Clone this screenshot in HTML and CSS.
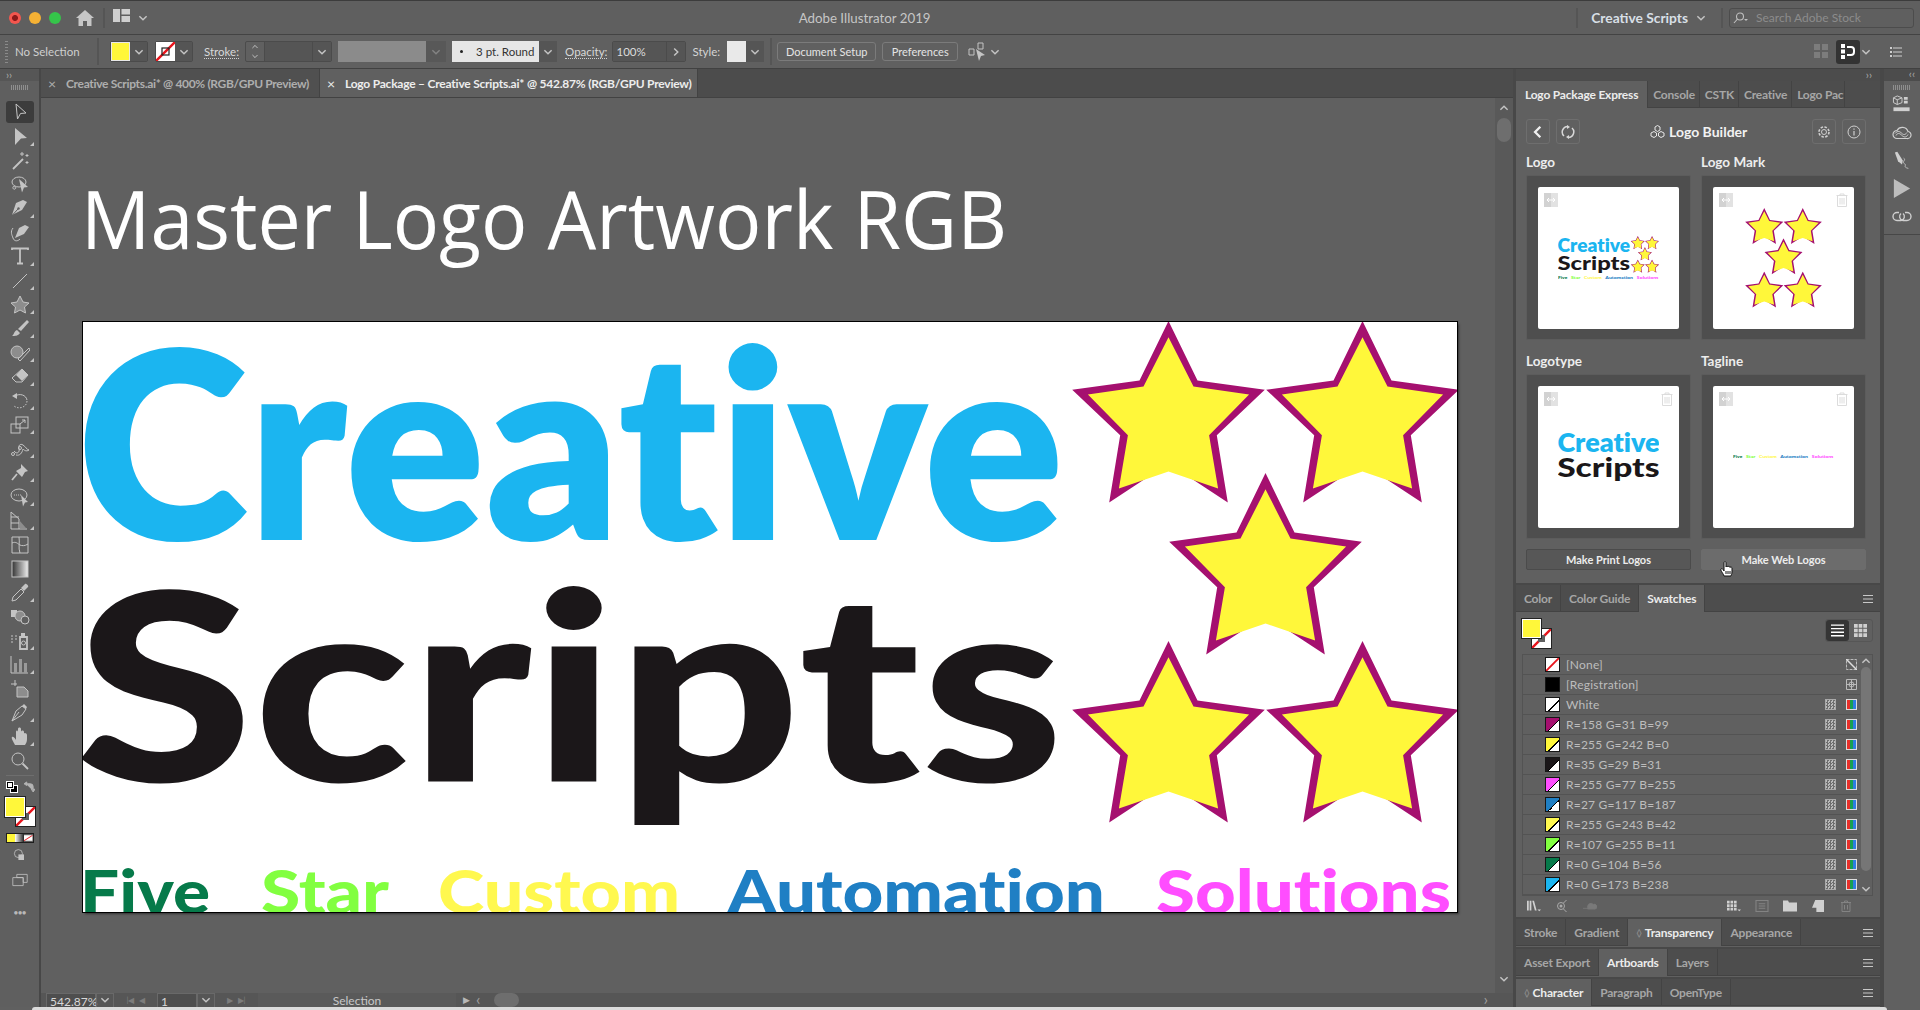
FILE: index.html
```html
<!DOCTYPE html>
<html>
<head>
    <meta charset="UTF-8">
    <title>Adobe Illustrator 2019</title>
    <link rel="stylesheet" href="styles.css">
</head>
<body>
    <svg class="defs" width="0" height="0">
        <symbol id="star" viewBox="0 0 194 183">
            <polygon fill="#a5106f" points="97,0 126,59.6 193.3,68.7 145.3,114.2 156.3,181.4 97,142.6 37.7,181.4 48.7,114.2 0.7,68.7 68,59.6"/>
            <polygon fill="#fff73a" points="97,16.2 122,65.6 177.6,73.5 137.6,114.2 146.6,167.5 97,150.5 47.4,167.5 56.4,114.2 16.4,73.5 72,65.6"/>
        </symbol>
        <symbol id="chev" viewBox="0 0 10 10"><path d="M2 3.5l3 3 3-3" fill="none" stroke="#c4c4c4" stroke-width="1.2"/></symbol>
        <symbol id="menu" viewBox="0 0 10 8"><path d="M0 .5h10M0 4h10M0 7.5h10" stroke="#c8c8c8" stroke-width="1"/></symbol>
        <symbol id="none" viewBox="0 0 19 19"><rect width="19" height="19" fill="#fff"/><path d="M0 19L19 0" stroke="#e8141c" stroke-width="2.4"/></symbol>
        <symbol id="place" viewBox="0 0 14 14"><rect width="14" height="14" fill="#e2e2e2"/><rect width="7" height="14" fill="#d2d2d2"/><path d="M3 7h8M3 7l2-2M3 7l2 2M11 7l-2-2M11 7l-2 2" stroke="#fff" fill="none"/></symbol>
        <symbol id="trash" viewBox="0 0 12 14"><path d="M.5 2.500h11M4 2.500V1h4v1.500M1.500 2.500v11h9v-11M4 5v6.500M6 5v6.500M8 5v6.500" fill="none" stroke="#dcdcdc"/></symbol>
        <symbol id="mini-stars" viewBox="0 0 388 503">
            <use href="#star" x="0" y="0" width="194" height="183"/>
            <use href="#star" x="194" y="0" width="194" height="183"/>
            <use href="#star" x="97" y="152" width="194" height="183"/>
            <use href="#star" x="0" y="320" width="194" height="183"/>
            <use href="#star" x="194" y="320" width="194" height="183"/>
        </symbol>
    </svg>

    <header class="titlebar">
        <div class="lights"><i class="light red"></i><i class="light amber"></i><i class="light green"></i></div>
        <svg class="home" viewBox="0 0 18 16"><path d="M9 0L0 8h2.500v8h4.500v-5h4v5h4.500V8H18z" fill="#c6c6c6"/></svg>
        <span class="vline"></span>
        <svg class="layout-icon" viewBox="0 0 17 13"><path d="M0 0h7v13H0zM8.500 0H17v5.500H8.500zM8.500 7H17v6H8.500z" fill="#cfcfcf"/></svg>
        <svg class="chev"><use href="#chev"/></svg>
        <div class="app-name">Adobe Illustrator 2019</div>
        <span class="vline"></span>
        <span class="workspace-name">Creative Scripts</span>
        <svg class="chev"><use href="#chev"/></svg>
        <span class="vline"></span>
        <div class="stock-search">
            <svg class="lens" viewBox="0 0 16 12"><circle cx="7" cy="4.500" r="3.500" fill="none" stroke="#c0c0c0" stroke-width="1.100"/><path d="M4.500 7L1 11" stroke="#c0c0c0" stroke-width="1.100"/><path d="M11 7h4l-2 2z" fill="#c0c0c0"/></svg>
            Search Adobe Stock
        </div>
    </header>

    <div class="controlbar">
        <span class="grip"></span>
        <span class="no-selection">No Selection</span>
        <span class="vline tall"></span>
        <div class="combo swatch-combo"><span class="fill-chip"></span><span class="drop"><svg class="chev"><use href="#chev"/></svg></span></div>
        <div class="combo swatch-combo"><svg class="stroke-chip" viewBox="0 0 19 19"><use href="#none"/><rect x="6" y="6" width="7" height="7" fill="none" stroke="#222" stroke-width="1.200"/></svg><span class="drop"><svg class="chev"><use href="#chev"/></svg></span></div>
        <span class="dotted stroke-label">Stroke:</span>
        <div class="combo stroke-width">
            <span class="stepper"><svg viewBox="0 0 10 22"><path d="M2 7l3-3 3 3M2 15l3 3 3-3" fill="none" stroke="#c4c4c4" stroke-width="1.100"/></svg></span>
            <span class="field"></span>
            <span class="drop"><svg class="chev"><use href="#chev"/></svg></span>
        </div>
        <div class="profile-box"><span></span><svg class="chev"><use href="#chev"/></svg></div>
        <div class="combo brush-combo"><span class="brush-name"><i></i>3 pt. Round</span><span class="drop"><svg class="chev"><use href="#chev"/></svg></span></div>
        <span class="dotted opacity-label">Opacity:</span>
        <div class="combo opacity-combo"><span class="field">100%</span><span class="drop"><svg class="chev side"><use href="#chev"/></svg></span></div>
        <span class="style-label">Style:</span>
        <div class="combo style-combo"><span class="style-chip"></span><span class="drop"><svg class="chev"><use href="#chev"/></svg></span></div>
        <span class="vline tall"></span>
        <button class="ctl-btn doc-setup">Document Setup</button>
        <button class="ctl-btn prefs">Preferences</button>
        <svg class="select-similar" viewBox="0 0 21 20"><path d="M1 7h5v6H1zM10 1h5v6h-5z" fill="none" stroke="#c4c4c4"/><path d="M8 7l9 6-4 1-2 5z" fill="#c4c4c4"/></svg>
        <svg class="chev"><use href="#chev"/></svg>
        <div class="control-right">
            <svg class="arrange" viewBox="0 0 15 15"><path d="M0 0h6v6H0zM8 0h6v6H8zM0 8h6v6H0zM8 8h6v6H8z" fill="#7c7c7c"/></svg>
            <span class="snap-btn"><svg viewBox="0 0 15 15"><path d="M0 0h4v4H0zM0 5.500h4v4H0zM0 11h4v4H0z" fill="#fff"/><path d="M6 3h4a3 3 0 0 1 3 3v2a3 3 0 0 1-3 3H6" fill="none" stroke="#fff" stroke-width="2"/></svg></span>
            <svg class="chev"><use href="#chev"/></svg>
            <svg class="list-icon" viewBox="0 0 12 10"><path d="M0 0h2v2H0zM0 4h2v2H0zM0 8h2v2H0zM3 .5h9v1H3zM3 4.500h9v1H3zM3 8.500h9v1H3z" fill="#d0d0d0"/></svg>
        </div>
    </div>

    <main class="workspace">
        <aside class="toolbar">
            <div class="tool-top"><span class="collapse">››</span><span class="hgrip"></span></div>
            <div class="tool active"><svg viewBox="0 0 20 20"><path d="M6 2l10 9-5.500.5L7.500 17z" class="ln"/></svg></div>
            <div class="tool more"><svg viewBox="0 0 20 20"><path d="M5 1l12 10-6 .5L5 18z" class="fl"/></svg></div>
            <div class="tool"><svg viewBox="0 0 20 20"><path d="M3 18L13 8" class="ln w2"/><path d="M12 1v4M10 3h4M17 3v3M15.500 4.500h3M17 10v3M15.500 11.500h3" class="ln"/></svg></div>
            <div class="tool"><svg viewBox="0 0 20 20"><ellipse cx="9" cy="7" rx="7" ry="5" class="ln"/><path d="M4 11c-2 1-1 4 1 3s0-3-1-2" class="ln"/><path d="M9 4l9 8-4 .5-2 5z" class="fl"/></svg></div>
            <div class="tool more"><svg viewBox="0 0 20 20"><path d="M17 3l-4-2-7 3-4 12 10-5z" class="fl"/><path d="M2.500 16L8 10" stroke="#5f5f5f"/><circle cx="8.500" cy="9.500" r="1.200" fill="#5f5f5f"/></svg></div>
            <div class="tool"><svg viewBox="0 0 20 20"><path d="M19 4l-4-2-6 3-4 10 9-4z" class="fl"/><path d="M3 5C0 9 2 12 3 15s4 4 7 1" class="ln"/></svg></div>
            <div class="tool more"><svg viewBox="0 0 20 20"><path d="M2 3V1.500h16V3M10 1.500v15M7 16.500h6" class="ln w2"/></svg></div>
            <div class="tool more"><svg viewBox="0 0 20 20"><path d="M3 17L17 3" class="ln"/></svg></div>
            <div class="tool more"><svg viewBox="0 0 20 20"><path d="M10 1l3 6 6 1-4.500 4 1 6-5.500-3-5.500 3 1-6L1 8l6-1z" fill="#8d8d8d" stroke="#c4c4c4"/></svg></div>
            <div class="tool more"><svg viewBox="0 0 20 20"><path d="M17 1l2 2-8 9-3-2z" class="fl"/><path d="M7 11l3 3c-2 3-5 3-8 3 2-1 2-5 5-6z" class="fl"/></svg></div>
            <div class="tool more"><svg viewBox="0 0 20 20"><circle cx="7" cy="9" r="6" fill="#8d8d8d" stroke="#c4c4c4"/><path d="M8 16L19 5l1 2L10 18z" class="ln"/></svg></div>
            <div class="tool more"><svg viewBox="0 0 20 20"><path d="M12 2l6 6-6 7H6l-4-4z" class="ln"/><path d="M12 2l6 6-6 6-6-6z" class="fl"/></svg></div>
            <div class="tool more"><svg viewBox="0 0 20 20"><path d="M5 5c5-3 11-1 12 4" class="ln"/><path d="M2 5l5-3v6z" class="fl"/><path d="M17 10c0 6-8 9-13 5" class="ln" stroke-dasharray="1.500 1.500"/></svg></div>
            <div class="tool more"><svg viewBox="0 0 20 20"><rect x="1" y="9" width="9" height="9" class="ln"/><rect x="6" y="2" width="12" height="11" class="ln"/><path d="M10 9l5-4M12 5h3v3" class="ln"/></svg></div>
            <div class="tool more"><svg viewBox="0 0 20 20"><path d="M4 12c3 4 6 1 5-2s1-6 4-4 3 4 6 5c-3 2-5 0-6-1-1 4-3 7-7 6" class="ln"/><circle cx="3" cy="15" r="1.500" class="ln"/><circle cx="10" cy="9" r="1.500" class="ln"/></svg></div>
            <div class="tool more"><svg viewBox="0 0 20 20"><path d="M11 1l7 7-3 1-3 5-6-6 5-3z" class="fl"/><path d="M7 11l-5 6" class="ln w2"/></svg></div>
            <div class="tool more"><svg viewBox="0 0 20 20"><ellipse cx="9" cy="8" rx="8" ry="6" class="ln"/><path d="M4 8h8" class="ln" stroke-dasharray="1 1"/><path d="M11 8l7 7-3 .5-2 4z" class="fl"/></svg></div>
            <div class="tool more"><svg viewBox="0 0 20 20"><path d="M1 1v17h16M1 1l8 7v10M1 6h8M1 12h8" class="ln"/><path d="M9 9l7 8H9z" fill="#8d8d8d"/></svg></div>
            <div class="tool"><svg viewBox="0 0 20 20"><path d="M2 2h16v16H2zM2 8c4-2 6 1 8 2s5 1 8-1M9 2c1 5-1 11 1 16" class="ln"/></svg></div>
            <div class="tool"><svg viewBox="0 0 20 20"><rect x="2" y="2" width="16" height="16" fill="url(#tool-grad)" stroke="#c4c4c4"/><defs><linearGradient id="tool-grad"><stop offset="0" stop-color="#333"/><stop offset="1" stop-color="#eee"/></linearGradient></defs></svg></div>
            <div class="tool more"><svg viewBox="0 0 20 20"><path d="M2 18l1-4 8-8 3 3-8 8z" class="ln"/><path d="M11 5l4-4c1-1 4 2 3 3l-4 4z" class="fl"/></svg></div>
            <div class="tool"><svg viewBox="0 0 20 20"><path d="M1 3h6v7H1z" class="fl"/><circle cx="10" cy="9" r="5" fill="#8d8d8d" stroke="#c4c4c4"/><circle cx="15" cy="13" r="4" fill="#5f5f5f" stroke="#c4c4c4"/></svg></div>
            <div class="tool more"><svg viewBox="0 0 20 20"><path d="M1 5h2M5 5h2M1 8h2M5 8h2M1 11h2" class="ln"/><path d="M10 6h7v12h-7z" class="ln w2"/><path d="M11 2h4v3h-4z" class="fl"/><circle cx="13.500" cy="12" r="2" class="ln"/></svg></div>
            <div class="tool more"><svg viewBox="0 0 20 20"><path d="M1 1v17h17" class="ln"/><path d="M4 8h3v10H4zM9 4h3v14H9zM14 8h3v10h-3z" fill="#9a9a9a"/></svg></div>
            <div class="tool"><svg viewBox="0 0 20 20"><path d="M1 5h6M5 1v6" class="ln"/><path d="M7 8h7l4 4v6H7z" fill="#8d8d8d" stroke="#c4c4c4"/></svg></div>
            <div class="tool more"><svg viewBox="0 0 20 20"><path d="M2 18l4-10 6-5 4 3-4 6z" class="ln"/><path d="M12 3l4 3 1-2-3-3z" class="fl"/><path d="M2 18L9 9" class="ln"/></svg></div>
            <div class="tool more"><svg viewBox="0 0 20 20"><path d="M5 18C3 14 1 11 2 10s3 1 4 3V5c0-2 2-2 2 0V2c0-2 3-2 3 0v3c0-2 3-2 3 0v2c0-2 3-1 3 1v4c0 3-1 4-2 6z" class="fl"/></svg></div>
            <div class="tool"><svg viewBox="0 0 20 20"><circle cx="8" cy="8" r="6" class="ln"/><path d="M12.500 12.500L18 18" class="ln w2"/></svg></div>
            <div class="tool-divider"></div>
            <div class="color-widget">
                <span class="mini-defaults"><i></i><i></i></span>
                <svg class="swap" viewBox="0 0 12 12"><path d="M2 3h5a3 3 0 0 1 3 3v5M0 3l3-2v4zM8 9l2 3 2-3z" fill="#b4b4b4" stroke="#b4b4b4"/></svg>
                <svg class="big-stroke" viewBox="0 0 19 19"><use href="#none"/><rect x="6" y="6" width="7" height="7" fill="#5f5f5f"/></svg>
                <span class="big-fill"></span>
            </div>
            <div class="mode-row"><i class="mode-color"></i><i class="mode-grad"></i><svg viewBox="0 0 9 13" preserveAspectRatio="none"><use href="#none"/></svg></div>
            <div class="tool small"><svg viewBox="0 0 20 20"><circle cx="8" cy="7" r="5" class="ln"/><rect x="8" y="8" width="7" height="7" class="fl"/></svg></div>
            <div class="tool small"><svg viewBox="0 0 20 20"><path d="M1 7h13v10H1z" class="ln"/><path d="M6 3h13v10H14V7H6z" class="ln"/></svg></div>
            <div class="dots">•••</div>
        </aside>

        <section class="doc">
            <nav class="doc-tabs">
                <div class="doc-tab"><span class="x">×</span>Creative Scripts.ai* @ 400% (RGB/GPU Preview)</div>
                <div class="doc-tab on"><span class="x">×</span>Logo Package – Creative Scripts.ai* @ 542.87% (RGB/GPU Preview)</div>
            </nav>
            <div class="canvas-row">
                <div class="canvas">
                    <svg class="title-art" viewBox="0 0 940 110"><text class="master" x="-1" y="72" textLength="926" lengthAdjust="spacingAndGlyphs">Master Logo Artwork RGB</text></svg>
                    <svg class="artboard" viewBox="0 0 1374 590">
                        <text class="word-c" x="-6" y="218" textLength="987" lengthAdjust="spacingAndGlyphs">Creative</text>
                        <text class="word-s" x="-8" y="459.500" textLength="989" lengthAdjust="spacingAndGlyphs">Scripts</text>
                        <text class="tag g" x="-3" y="592" textLength="130" lengthAdjust="spacingAndGlyphs">Five</text>
                        <text class="tag l" x="178" y="592" textLength="128" lengthAdjust="spacingAndGlyphs">Star</text>
                        <text class="tag y" x="355" y="592" textLength="242" lengthAdjust="spacingAndGlyphs">Custom</text>
                        <text class="tag b" x="644" y="592" textLength="378" lengthAdjust="spacingAndGlyphs">Automation</text>
                        <text class="tag m" x="1073" y="592" textLength="295" lengthAdjust="spacingAndGlyphs">Solutions</text>
                        <use href="#mini-stars" x="988.500" y="-1" width="388" height="503"/>
                    </svg>
                </div>
                <div class="vscroll"><svg class="chev up"><use href="#chev"/></svg><span class="thumb"></span><svg class="chev"><use href="#chev"/></svg></div>
            </div>
            <div class="statusbar">
                <div class="st-box zoom-box">542.87%</div><span class="st-drop"><svg class="chev"><use href="#chev"/></svg></span>
                <span class="st-nav">|◀ &nbsp;◀</span>
                <div class="st-box page-box">1</div><span class="st-drop"><svg class="chev"><use href="#chev"/></svg></span>
                <span class="st-nav">▶ &nbsp;▶|</span>
                <div class="st-mode">Selection</div>
                <span class="st-play">▶</span>
                <span class="st-left">‹</span>
                <span class="h-thumb"></span>
                <span class="st-right">›</span>
            </div>
        </section>

        <section class="panels">
            <div class="collapse-bar">››</div>
            <div class="group builder">
                <div class="tabs">
                    <span class="tab on lpe">Logo Package Express</span><span class="tab tight">Console</span><span class="tab tight">CSTK</span><span class="tab tight">Creative</span><span class="tab tight clip">Logo Pac</span>
                </div>
                <div class="builder-head">
                    <span class="icon-btn"><svg viewBox="0 0 10 12"><path d="M7 1.500L2.500 6 7 10.500" fill="none" stroke="#f0f0f0" stroke-width="2"/></svg></span>
                    <span class="icon-btn"><svg viewBox="0 0 14 14"><path d="M3 11A5.500 5.500 0 0 1 7 1.500M11 3a5.500 5.500 0 0 1-4 9.500" fill="none" stroke="#d8d8d8" stroke-width="1.500"/><path d="M6 0v4l3-2zM8 10v4l-3-2z" fill="#d8d8d8"/></svg></span>
                    <h2 class="builder-title"><svg viewBox="0 0 15 13"><path d="M7.500.5l2.500 1.500v3L7.500 6.500 5 5V2zM4 6.500L6.500 8v3L4 12.500 1 11V8zM11 6.500L14 8v3l-3 1.500L8.500 11V8z" fill="none" stroke="#e8e8e8"/></svg>Logo Builder</h2>
                    <span class="icon-btn"><svg viewBox="0 0 14 14"><circle cx="7" cy="7" r="2.500" fill="none" stroke="#cfcfcf"/><circle cx="7" cy="7" r="5" fill="none" stroke="#cfcfcf" stroke-width="1.600" stroke-dasharray="2.500 1.400"/></svg></span>
                    <span class="icon-btn"><svg viewBox="0 0 14 14"><circle cx="7" cy="7" r="6" fill="none" stroke="#cfcfcf"/><path d="M7 6v4.500M7 3.500v1.200" stroke="#cfcfcf" stroke-width="1.200"/></svg></span>
                </div>
                <div class="logo-grid">
                    <div class="logo-cell">
                        <h3>Logo</h3>
                        <div class="logo-card"><div class="logo-white">
                            <svg class="place-ic"><use href="#place"/></svg>
                            <svg class="art-logo" viewBox="0 0 1374 590">
                                <text class="word-c" x="-6" y="218" textLength="987" lengthAdjust="spacingAndGlyphs">Creative</text>
                                <text class="word-s" x="-8" y="459.500" textLength="989" lengthAdjust="spacingAndGlyphs">Scripts</text>
                                <text class="tag g" x="0" y="580" textLength="127" lengthAdjust="spacingAndGlyphs">Five</text>
                                <text class="tag l" x="178" y="580" textLength="128" lengthAdjust="spacingAndGlyphs">Star</text>
                                <text class="tag y" x="355" y="580" textLength="240" lengthAdjust="spacingAndGlyphs">Custom</text>
                                <text class="tag b" x="644" y="580" textLength="376" lengthAdjust="spacingAndGlyphs">Automation</text>
                                <text class="tag m" x="1073" y="580" textLength="293" lengthAdjust="spacingAndGlyphs">Solutions</text>
                                <use href="#mini-stars" x="988.500" y="-1" width="388" height="503"/>
                            </svg>
                        </div></div>
                    </div>
                    <div class="logo-cell">
                        <h3>Logo Mark</h3>
                        <div class="logo-card"><div class="logo-white">
                            <svg class="place-ic"><use href="#place"/></svg>
                            <svg class="trash-ic"><use href="#trash"/></svg>
                            <svg class="art-mark"><use href="#mini-stars"/></svg>
                        </div></div>
                    </div>
                    <div class="logo-cell">
                        <h3>Logotype</h3>
                        <div class="logo-card"><div class="logo-white">
                            <svg class="place-ic"><use href="#place"/></svg>
                            <svg class="trash-ic"><use href="#trash"/></svg>
                            <svg class="art-type" viewBox="0 20 975 490">
                                <text class="word-c" x="-6" y="218" textLength="987" lengthAdjust="spacingAndGlyphs">Creative</text>
                                <text class="word-s" x="-8" y="459.500" textLength="989" lengthAdjust="spacingAndGlyphs">Scripts</text>
                            </svg>
                        </div></div>
                    </div>
                    <div class="logo-cell">
                        <h3>Tagline</h3>
                        <div class="logo-card"><div class="logo-white">
                            <svg class="place-ic"><use href="#place"/></svg>
                            <svg class="trash-ic"><use href="#trash"/></svg>
                            <svg class="art-tag" viewBox="0 530 1374 60">
                                <text class="tag g" x="0" y="580" textLength="127" lengthAdjust="spacingAndGlyphs">Five</text>
                                <text class="tag l" x="178" y="580" textLength="128" lengthAdjust="spacingAndGlyphs">Star</text>
                                <text class="tag y" x="355" y="580" textLength="240" lengthAdjust="spacingAndGlyphs">Custom</text>
                                <text class="tag b" x="644" y="580" textLength="376" lengthAdjust="spacingAndGlyphs">Automation</text>
                                <text class="tag m" x="1073" y="580" textLength="293" lengthAdjust="spacingAndGlyphs">Solutions</text>
                            </svg>
                        </div></div>
                    </div>
                    <button class="make-btn">Make Print Logos</button>
                    <button class="make-btn hover">Make Web Logos</button>
                </div>
                <svg class="hand-cursor" viewBox="0 0 14 17"><path d="M4 16C3 13 0 10 1 9s2 0 3 2V3c0-2 2-2 2 0v4c0-1 2-1 2 0 0-1 2-1 2 .500 0-1 2-.5 2 .5v4c0 2-1 3-1 4z" fill="#fff" stroke="#111"/><path d="M6 11v3M8 11v3M10 11v3" stroke="#111"/></svg>
            </div>

            <div class="group swatches">
                <div class="tabs"><span class="tab">Color</span><span class="tab">Color Guide</span><span class="tab on">Swatches</span><svg class="menu"><use href="#menu"/></svg></div>
                <div class="sw-head">
                    <div class="sw-fillstroke">
                        <svg class="sw-stroke" viewBox="0 0 19 19"><use href="#none"/><rect x="6" y="6" width="7" height="7" fill="#5f5f5f"/></svg>
                        <span class="sw-fill"></span>
                    </div>
                    <div class="view-toggle">
                        <span class="on"><svg viewBox="0 0 12 11"><path d="M0 .5h12M0 3.800h12M0 7.100h12M0 10.400h12" stroke="#fff" stroke-width="1.300"/></svg></span>
                        <span><svg viewBox="0 0 14 14"><path d="M0 0h4v4H0zM5 0h4v4H5zM10 0h4v4h-4zM0 5h4v4H0zM5 5h4v4H5zM10 5h4v4h-4zM0 10h4v4H0zM5 10h4v4H5zM10 10h4v4h-4z" fill="#d0d0d0"/></svg></span>
                    </div>
                </div>
                <div class="sw-list">
                    <div class="sw-rows">
                        <div class="sw-row"><svg class="chip-svg"><use href="#none"/></svg><span class="name">[None]</span><svg class="sw-none" viewBox="0 0 11 11"><path d="M.5.5h10v10H.5z" fill="none" stroke="#bbb" stroke-dasharray="3 1"/><path d="M0 0l11 11" stroke="#ddd" stroke-width="1.500"/></svg></div>
                        <div class="sw-row"><span class="chip black"></span><span class="name">[Registration]</span><svg class="sw-none" viewBox="0 0 11 11"><path d="M.5.5h10v10H.5zM5.500 0v11M0 5.500h11" fill="none" stroke="#bbb"/><circle cx="5.500" cy="5.500" r="2.500" fill="none" stroke="#bbb"/></svg></div>
                        <div class="sw-row"><span class="chip white"></span><span class="name">White</span><i class="gl"></i><i class="cm"></i></div>
                        <div class="sw-row"><span class="chip c1"></span><span class="name">R=158 G=31 B=99</span><i class="gl"></i><i class="cm"></i></div>
                        <div class="sw-row"><span class="chip c2"></span><span class="name">R=255 G=242 B=0</span><i class="gl"></i><i class="cm"></i></div>
                        <div class="sw-row"><span class="chip c3"></span><span class="name">R=35 G=29 B=31</span><i class="gl"></i><i class="cm"></i></div>
                        <div class="sw-row"><span class="chip c4"></span><span class="name">R=255 G=77 B=255</span><i class="gl"></i><i class="cm"></i></div>
                        <div class="sw-row"><span class="chip c5"></span><span class="name">R=27 G=117 B=187</span><i class="gl"></i><i class="cm"></i></div>
                        <div class="sw-row"><span class="chip c6"></span><span class="name">R=255 G=243 B=42</span><i class="gl"></i><i class="cm"></i></div>
                        <div class="sw-row"><span class="chip c7"></span><span class="name">R=107 G=255 B=11</span><i class="gl"></i><i class="cm"></i></div>
                        <div class="sw-row"><span class="chip c8"></span><span class="name">R=0 G=104 B=56</span><i class="gl"></i><i class="cm"></i></div>
                        <div class="sw-row"><span class="chip c9"></span><span class="name">R=0 G=173 B=238</span><i class="gl"></i><i class="cm"></i></div>
                    </div>
                    <div class="sw-scroll"><svg class="chev up"><use href="#chev"/></svg><span></span><svg class="chev"><use href="#chev"/></svg></div>
                </div>
                <div class="sw-foot">
                    <svg viewBox="0 0 16 12"><path d="M0 0h2v11H0zM3 0h2v11H3zM6 0l3 11h2L8 0z" fill="#d0d0d0"/><path d="M12 10h4l-2 2z" fill="#d0d0d0"/></svg>
                    <svg viewBox="0 0 11 12"><circle cx="4.500" cy="6" r="3.500" fill="none" stroke="#aaa"/><circle cx="4.500" cy="6" r="1.500" fill="#aaa"/><path d="M7 3l3-3M7 9l3 3" stroke="#aaa"/></svg>
                    <svg class="faded" viewBox="0 0 18 12"><path d="M6 6a4 4 0 0 1 7-2 3 3 0 0 1 3 6H6zM0 9h6" fill="#808080" stroke="#808080"/></svg>
                    <span class="foot-gap"></span>
                    <svg viewBox="0 0 16 12"><path d="M0 0h3v3H0zM4 0h3v3H4zM8 0h3v3H8zM0 4h3v3H0zM4 4h3v3H4zM8 4h3v3H8zM0 8h3v3H0zM4 8h3v3H4zM8 8h3v3H8z" fill="#d0d0d0"/><path d="M12 10h4l-2 2z" fill="#d0d0d0"/></svg>
                    <svg class="faded" viewBox="0 0 12 11"><path d="M.5.5h11v10H.5zM3 3.500h6M3 5.500h6M3 7.500h6" fill="none" stroke="#8c8c8c"/></svg>
                    <svg viewBox="0 0 14 11"><path d="M0 0h5l1 2h8v9H0z" fill="#d0d0d0"/></svg>
                    <svg viewBox="0 0 11 11"><path d="M3 0h8v11H4V7H0z" fill="#d0d0d0"/></svg>
                    <svg class="faded" viewBox="0 0 11 12"><path d="M.5 2.500h10M4 2.500V1h3v1.500M1.500 2.500v9h8v-9M4 5v4.500M7 5v4.500" fill="none" stroke="#8c8c8c"/></svg>
                </div>
            </div>

            <div class="group collapsed"><div class="tabs"><span class="tab">Stroke</span><span class="tab">Gradient</span><span class="tab on"><b class="updown">◊</b>Transparency</span><span class="tab">Appearance</span><svg class="menu"><use href="#menu"/></svg></div></div>
            <div class="group collapsed"><div class="tabs"><span class="tab">Asset Export</span><span class="tab on">Artboards</span><span class="tab">Layers</span><svg class="menu"><use href="#menu"/></svg></div></div>
            <div class="group collapsed"><div class="tabs"><span class="tab on"><b class="updown">◊</b>Character</span><span class="tab">Paragraph</span><span class="tab">OpenType</span><svg class="menu"><use href="#menu"/></svg></div></div>
        </section>

        <aside class="strip">
            <div class="strip-top"><span class="collapse">‹‹</span><span class="hgrip"></span></div>
            <div class="strip-icons">
                <svg viewBox="0 0 20 20"><path d="M5 1l5 2v5L5 10 1 8V3zM1 3l4 2 5-2M5 5v5" fill="none" stroke="#cfcfcf"/><path d="M12 2h4v3h-4zM12 6h4v3h-4z" fill="#cfcfcf"/><path d="M1 13h17v4H1z" fill="#cfcfcf"/></svg>
                <svg viewBox="0 0 20 14"><path d="M5 13a4 4 0 0 1 0-8 6 6 0 0 1 11 1 3.500 3.500 0 0 1-1 7z" fill="none" stroke="#cfcfcf" stroke-width="1.200"/><path d="M4 10c2-4 5-1 6 0s4 3 6-1M3 8c3-4 6-1 7 0s3 2 5-1" fill="none" stroke="#cfcfcf"/></svg>
                <svg viewBox="0 0 20 24"><path d="M1 2l3-1 7 11-1 5-5-4z" fill="#cfcfcf"/><path d="M12 9c4 2-3 5 1 7s-3 4 5 6" fill="none" stroke="#cfcfcf"/></svg>
                <svg viewBox="0 0 14 14"><path d="M1 0l12 7-12 7z" fill="#bdbdbd"/></svg>
                <svg viewBox="0 0 20 10"><path d="M7 1H5a4 4 0 0 0 0 8h4a4 4 0 0 0 2-7M13 1h2a4 4 0 0 1 0 8h-4a4 4 0 0 1-2-7" fill="none" stroke="#cfcfcf" stroke-width="1.400"/></svg>
            </div>
        </aside>
    </main>
    <div class="bottom-edge"></div>
</body>
</html>
```

FILE: styles.css
```css
* { box-sizing: border-box; }
html, body { margin: 0; padding: 0; }
body {
    width: 1920px; height: 1010px; overflow: hidden;
    display: flex; flex-direction: column;
    background: #606060; color: #d4d4d4;
    font: 12px "Lato", "Open Sans", sans-serif;
}
.defs { position: absolute; }
i { display: block; }
.chev { width: 12px; height: 12px; flex: none; }
.chev.up { transform: rotate(180deg); }
.chev.side { transform: rotate(-90deg); }
.vline { width: 2px; height: 20px; background: #555; flex: none; }
.vline.tall { height: 27px; }

/* title bar */
.titlebar { height: 35px; display: flex; align-items: center; background: #5f5f5f; border-top: 1px solid #3c3c3c; border-bottom: 1px solid #434343; padding-left: 9px; flex: none; }
.lights { display: flex; gap: 8px; }
.light { width: 12px; height: 12px; border-radius: 50%; }
.red { background: radial-gradient(#8c1a1a 30%, #f4564e 40%); }
.amber { background: #f5b134; }
.green { background: #35c44a; }
.home { width: 18px; height: 16px; margin: 0 9px 0 15px; }
.layout-icon { width: 17px; height: 13px; margin: -4px 7px 0 8px; }
.app-name { flex: 1; text-align: center; font-size: 13.300px; color: #c6c6c6; padding-right: 10px; }
.workspace-name { font-size: 13.800px; font-weight: 700; color: #d8dfe6; margin: 0 7px 0 13px; }
.titlebar .chev { margin-right: 14px; }
.stock-search { width: 185px; height: 20px; margin: 0 6px 0 6px; display: flex; align-items: center; gap: 7px; border: 1px solid #4c4c4c; border-radius: 3px; padding-left: 3px; color: #8c8c8c; font-size: 12px; }
.lens { width: 16px; height: 12px; }

/* control bar */
.controlbar { height: 34px; display: flex; align-items: center; background: #606060; border-bottom: 1px solid #414141; padding-left: 5px; flex: none; }
.grip { width: 3px; height: 22px; background: repeating-linear-gradient(#8a8a8a 0 1px, transparent 1px 3px); }
.no-selection { width: 89px; padding-left: 7px; font-size: 11.500px; color: #cfcfcf; }
.combo { display: flex; height: 21px; border: 1px solid #4b4b4b; border-radius: 2px; flex: none; align-items: center; }
.drop { width: 18px; height: 100%; display: flex; align-items: center; justify-content: center; background: #555; }
.swatch-combo { margin: 0 7px 0 0; width: 38px; }
.controlbar > .vline + .swatch-combo { margin-left: 5px; }
.controlbar > .no-selection + .vline { margin-right: 6px; }
.fill-chip { width: 19px; height: 19px; background: #fff73a; border: 1px solid #e8e8e8; flex: none; }
.stroke-chip { width: 19px; height: 19px; flex: none; }
.dotted { border-bottom: 1px dotted #d0d0d0; line-height: 13px; flex: none; font-size: 11.500px; color: #d8d8d8; }
.stroke-label { margin: 0 6px 0 4px; }
.stroke-width { width: 87px; }
.stepper { width: 19px; height: 100%; border-right: 1px solid #4b4b4b; display: flex; justify-content: center; }
.stepper svg { width: 10px; height: 100%; }
.field { flex: 1; height: 100%; background: #555; border-right: 1px solid #4b4b4b; font-size: 11.500px; line-height: 19px; padding-left: 3px; color: #dcdcdc; }
.profile-box { width: 108px; height: 21px; margin: 0 6px; display: flex; background: #585858; flex: none; align-items: center; }
.profile-box span { width: 88px; height: 100%; background: #8b8b8b; margin-right: 4px; }
.profile-box .chev { opacity: .4; }
.brush-combo { width: 105px; border: 0; }
.brush-name { width: 87px; height: 100%; background: #e6e6e6; color: #333; font-size: 11.500px; display: flex; align-items: center; padding-left: 8px; gap: 13px; }
.brush-name i { width: 3px; height: 3px; border-radius: 50%; background: #222; }
.opacity-label { margin: 0 5px 0 8px; }
.opacity-combo { width: 74px; }
.style-label { margin: 0 7px 0 6px; font-size: 11.500px; }
.style-combo { width: 37px; border: 0; }
.style-chip { width: 19px; height: 21px; background: #e9e9e9; flex: none; }
.style-combo + .vline { margin: 0 5px 0 6px; }
.ctl-btn { height: 19px; background: transparent; border: 1px solid #7b7b7b; border-radius: 3px; color: #e4e4e4; font: 11px "Lato", sans-serif; padding: 0; flex: none; }
.doc-setup { width: 99px; margin-right: 6px; }
.prefs { width: 76px; margin-right: 10px; }
.select-similar { width: 21px; height: 20px; }
.control-right { margin-left: auto; display: flex; align-items: center; padding-right: 18px; }
.arrange { width: 15px; height: 15px; margin-right: 7px; }
.snap-btn { width: 24px; height: 24px; background: #333; border-radius: 3px; display: flex; align-items: center; justify-content: center; }
.snap-btn svg { width: 15px; height: 15px; }
.control-right .chev { margin: 0 18px 0 0; }
.list-icon { width: 12px; height: 10px; }

/* main area */
.workspace { flex: 1; display: flex; min-height: 0; }
.toolbar { width: 41px; flex: none; border-right: 2px solid #474747; background: #5f5f5f; display: flex; flex-direction: column; align-items: center; }
.tool-top { width: 100%; height: 32px; display: flex; flex-direction: column; align-items: center; }
.collapse { font-size: 11px; line-height: 11px; color: #a8a8a8; height: 12px; }
.tool-top .collapse { align-self: flex-start; padding-left: 6px; width: 100%; background: #565656; }
.hgrip { width: 18px; height: 5px; margin-top: 4px; background: repeating-linear-gradient(90deg, #8f8f8f 0 1px, transparent 1px 2px); }
.tool { width: 28px; height: 24px; flex: none; position: relative; display: flex; align-items: center; justify-content: center; }
.tool svg { width: 20px; height: 20px; }
.tool.active { background: #3c3c3c; border-radius: 3px; height: 22px; margin-bottom: 2px; }
.tool.more::after { content: ""; position: absolute; right: 0; bottom: 3px; border: 2px solid transparent; border-right-color: #c4c4c4; border-bottom-color: #c4c4c4; }
.tool.small svg { width: 16px; height: 16px; }
.ln { fill: none; stroke: #c4c4c4; stroke-width: 1; }
.ln.w2 { stroke-width: 1.800; }
.fl { fill: #c4c4c4; }
.tool-divider { width: 28px; height: 1px; background: #6e6e6e; margin: 2px 0 0; }
.color-widget { width: 34px; height: 52px; position: relative; flex: none; margin-top: 2px; }
.mini-defaults { position: absolute; left: 3px; top: 3px; width: 12px; height: 12px; }
.mini-defaults i { position: absolute; width: 8px; height: 8px; border: 1px solid #fff; }
.mini-defaults i:first-child { right: 0; bottom: 0; background: #000; }
.mini-defaults i:last-child { left: 0; top: 0; background: #fff; outline: 1px solid #000; outline-offset: -2px; }
.swap { position: absolute; right: 2px; top: 3px; width: 11px; height: 11px; }
.big-stroke { position: absolute; left: 13px; top: 29px; width: 19px; height: 19px; outline: 1px solid #222; }
.big-fill { position: absolute; left: 2px; top: 19px; width: 20px; height: 20px; background: #fff73a; border: 1px solid #fff; outline: 1px solid #222; }
.mode-row { display: flex; width: 28px; height: 10px; margin: 3px 0 1px; border: 1px solid #1e1e1e; flex: none; }
.mode-row i, .mode-row svg { flex: 1; height: 100%; width: 9px; }
.mode-color { background: #fff73a; }
.mode-grad { background: linear-gradient(90deg, #fff, #222); }
.dots { margin-top: 15px; color: #b8b8b8; font-size: 9px; letter-spacing: -1px; line-height: 12px; }

/* document */
.doc { flex: 1; min-width: 0; display: flex; flex-direction: column; }
.doc-tabs { height: 29px; display: flex; background: #4c4c4c; border-bottom: 1px solid #424242; flex: none; }
.doc-tab { width: 279px; display: flex; align-items: center; font-size: 12px; font-weight: 700; color: #aeaeae; background: #505050; white-space: nowrap; padding-left: 7px; border-right: 1px solid #434343; letter-spacing: -.33px; }
.doc-tab.on { width: 378px; background: #606060; color: #ededed; letter-spacing: -.22px; }
.x { width: 18px; font-size: 14px; font-weight: 400; }
.canvas-row { flex: 1; display: flex; min-height: 0; }
.canvas { flex: 1; position: relative; background: #606060; overflow: hidden; }
.title-art { position: absolute; left: 41px; top: 79px; width: 940px; height: 110px; }
.master { font: 400 80px "Open Sans", sans-serif; fill: #fff; }
.artboard { position: absolute; left: 42px; top: 224px; width: 1374px; height: 590px; background: #fff; outline: 1px solid #000; box-shadow: 2px 2px 2px #333; }
.word-c { font: 800 262px "Lato", sans-serif; font-variant-ligatures: none; fill: #1bb5f0; }
.word-s { font: 900 262px "Lato", sans-serif; font-variant-ligatures: none; fill: #1b1719; }
.tag { font: 900 60px "Lato", sans-serif; font-variant-ligatures: none; }
.tag.g { fill: #067a4a; }
.tag.l { fill: #82ff40; }
.tag.y { fill: #fff84f; }
.tag.b { fill: #1f7fc4; }
.tag.m { fill: #ff4dff; }
.vscroll { width: 18px; background: #595959; flex: none; display: flex; flex-direction: column; align-items: center; padding: 4px 0 8px; }
.vscroll .thumb { width: 14px; height: 24px; margin-top: 4px; background: #6e6e6e; border-radius: 7px; margin-bottom: auto; }
.statusbar { height: 14px; display: flex; align-items: flex-start; background: #565656; flex: none; overflow: hidden; font-size: 12px; color: #c8c8c8; padding-left: 5px; }
.st-box { height: 17px; background: #4e4e4e; border: 1px solid #696969; border-bottom: 0; line-height: 15px; padding-left: 3px; color: #d8d8d8; }
.zoom-box { width: 50px; }
.page-box { width: 40px; }
.st-drop { width: 18px; height: 14px; display: flex; justify-content: center; border: 1px solid #696969; border-bottom: 0; }
.st-nav { width: 43px; font-size: 8px; color: #7c7c7c; line-height: 14px; text-align: center; white-space: nowrap; }
.st-mode { width: 198px; text-align: center; line-height: 15px; margin-left: 0; background: #5a5a5a; }
.st-play { width: 20px; font-size: 9px; color: #b8b8b8; text-align: center; line-height: 14px; }
.st-left { width: 18px; color: #a0a0a0; line-height: 12px; font-size: 16px; }
.h-thumb { width: 25px; height: 14px; background: #6e6e6e; border-radius: 7px; }
.st-right { margin-left: auto; margin-right: 25px; color: #a0a0a0; line-height: 12px; font-size: 16px; }

/* panels */
.panels { width: 369px; flex: none; display: flex; flex-direction: column; gap: 2px; background: #484848; border-left: 3px solid #484848; border-right: 2px solid #484848; position: relative; }
.collapse-bar { height: 12px; margin-bottom: -2px; background: #4c4c4c; color: #a8a8a8; font-size: 11px; line-height: 11px; text-align: right; padding-right: 8px; }
.group { background: #606060; flex: none; }
.tabs { height: 27px; display: flex; background: #4d4d4d; border-bottom: 1px solid #434343; align-items: stretch; position: relative; }
.tab { display: flex; align-items: center; padding: 0 8px; font-size: 12px; font-weight: 700; color: #a6a6a6; border-right: 1px solid #434343; white-space: nowrap; letter-spacing: -.2px; }
.tab.on { background: #606060; color: #ececec; margin-bottom: -1px; }
.tab.lpe { padding: 0 9px; }
.tab.tight { padding: 0 4px 0 5px; }
.tab.clip { width: 53px; overflow: hidden; padding-right: 0; }
.menu { position: absolute; right: 7px; top: 10px; width: 10px; height: 8px; }
.updown { font-weight: 400; margin-right: 3px; color: #909090; font-size: 10px; }

.builder { height: 502px; position: relative; }
.builder-head { display: flex; align-items: center; gap: 6px; padding: 11px 14px 0 10px; }
.icon-btn { width: 24px; height: 25px; border: 1px solid #6e6e6e; border-radius: 3px; display: flex; align-items: center; justify-content: center; flex: none; }
.icon-btn svg { width: 14px; height: 14px; }
.builder-title { flex: 1; margin: 0; padding-left: 64px; display: flex; align-items: center; gap: 4px; font-size: 14px; font-weight: 700; color: #f2f2f2; }
.builder-title svg { width: 15px; height: 13px; }
.logo-grid { display: grid; grid-template-columns: 165px 165px; column-gap: 10px; row-gap: 0; padding: 10px 0 0 10px; }
.logo-cell h3 { margin: 0 0 5px; font-size: 13.500px; line-height: 16px; font-weight: 700; color: #ededed; }
.logo-cell:nth-child(3), .logo-cell:nth-child(4) { margin-top: 13px; }
.logo-card { height: 165px; background: #4e4e4e; border: 1px solid #5c5c5c; border-radius: 2px; display: flex; align-items: center; justify-content: center; }
.logo-white { width: 141px; height: 142px; background: #fff; border-radius: 2px; position: relative; display: flex; align-items: center; justify-content: center; }
.place-ic { position: absolute; left: 6px; top: 6px; width: 14px; height: 14px; }
.trash-ic { position: absolute; right: 6px; top: 6px; width: 12px; height: 14px; }
.art-logo { width: 101px; height: 43.400px; overflow: hidden; }
.art-mark { width: 77px; height: 100px; }
.art-type { width: 101px; height: 51px; }
.art-tag { width: 101px; height: 5px; }
.make-btn { height: 21px; margin-top: 10px; background: #575757; border: 1px solid #4b4b4b; border-radius: 2px; color: #ececec; font: 700 11px "Lato", sans-serif; padding: 0; }
.make-btn.hover { background: #6c6c6c; border-color: #6c6c6c; }
.hand-cursor { position: absolute; left: 204px; top: 479px; width: 14px; height: 17px; }

.swatches { height: 332px; }
.sw-head { height: 42px; display: flex; justify-content: space-between; padding: 7px 7px 0 6px; }
.sw-fillstroke { width: 30px; height: 30px; position: relative; }
.sw-stroke { position: absolute; left: 10px; top: 10px; width: 19px; height: 19px; outline: 1px solid #222; }
.sw-fill { position: absolute; left: 0; top: 0; width: 19px; height: 19px; background: #fff73a; border: 1px solid #fff; outline: 1px solid #222; }
.view-toggle { display: flex; width: 48px; height: 23px; border: 1px solid #565656; border-radius: 3px; }
.view-toggle span { flex: 1; display: flex; align-items: center; justify-content: center; }
.view-toggle .on { background: #353535; border-radius: 3px; }
.view-toggle svg { width: 13px; height: 13px; }
.sw-list { margin: 0 7px 0 6px; height: 242px; display: flex; border: 1px solid #535353; }
.sw-rows { flex: 1; min-width: 0; }
.sw-row { height: 20px; display: flex; align-items: center; padding-left: 22px; border-bottom: 1px solid #535353; padding-right: 3px; }
.chip, .chip-svg { width: 15px; height: 15px; margin-right: 6px; flex: none; outline: 1px solid #161616; outline-offset: -1px; }
.name { flex: 1; font-size: 12px; color: #bdbdbd; letter-spacing: .2px; }
.gl { width: 11px; height: 11px; margin-right: 10px; border: 1px solid #aaa; background: repeating-conic-gradient(#6e6e6e 0 25%, #bbb 0 50%) 0 0 / 3px 3px; }
.cm { width: 11px; height: 11px; border: 1px solid #ddd; background: linear-gradient(90deg, #e8302a 0 36%, #18a050 36% 64%, #2c7de0 64%); }
.sw-none { width: 11px; height: 11px; }
.chip { background: linear-gradient(135deg, var(--sw) 0 54%, #000 54% 60%, #fff 60%); }
.chip.black { background: #000; }
.chip.white { --sw: #fff; }
.c1 { --sw: #a5106f; }
.c2 { --sw: #fff73a; }
.c3 { --sw: #1b1719; }
.c4 { --sw: #ff4dff; }
.c5 { --sw: #1f7fc4; }
.c6 { --sw: #fff84f; }
.c7 { --sw: #82ff40; }
.c8 { --sw: #067a4a; }
.c9 { --sw: #1bb5f0; }
.sw-scroll { width: 12px; flex: none; display: flex; flex-direction: column; align-items: center; }
.sw-scroll span { width: 10px; flex: 1; margin: 0 0 12px; background: #767676; border-radius: 5px; }
.sw-foot { display: flex; align-items: center; height: 20px; padding: 0 27px 0 11px; gap: 14px; }
.sw-foot svg { height: 12px; width: 14px; flex: none; }
.sw-foot .faded { opacity: .8; }
.foot-gap { flex: 1; }
.collapsed { height: 28px; }

.strip { width: 38px; flex: none; border-left: 2px solid #484848; display: flex; flex-direction: column; align-items: center; background: #606060; }
.strip-top { width: 100%; display: flex; flex-direction: column; align-items: center; }
.strip-top .collapse { width: 100%; background: #4c4c4c; text-align: right; padding-right: 5px; line-height: 10px; }
.strip-icons { width: 100%; border-bottom: 1px solid #474747; display: flex; flex-direction: column; align-items: center; gap: 9px; padding: 5px 0 8px; }
.strip-icons svg { width: 20px; height: 19px; }
.bottom-edge { height: 3px; margin: 0 33px 0 32px; background: #dcdcdc; border-radius: 3px 3px 0 0; flex: none; }
```
